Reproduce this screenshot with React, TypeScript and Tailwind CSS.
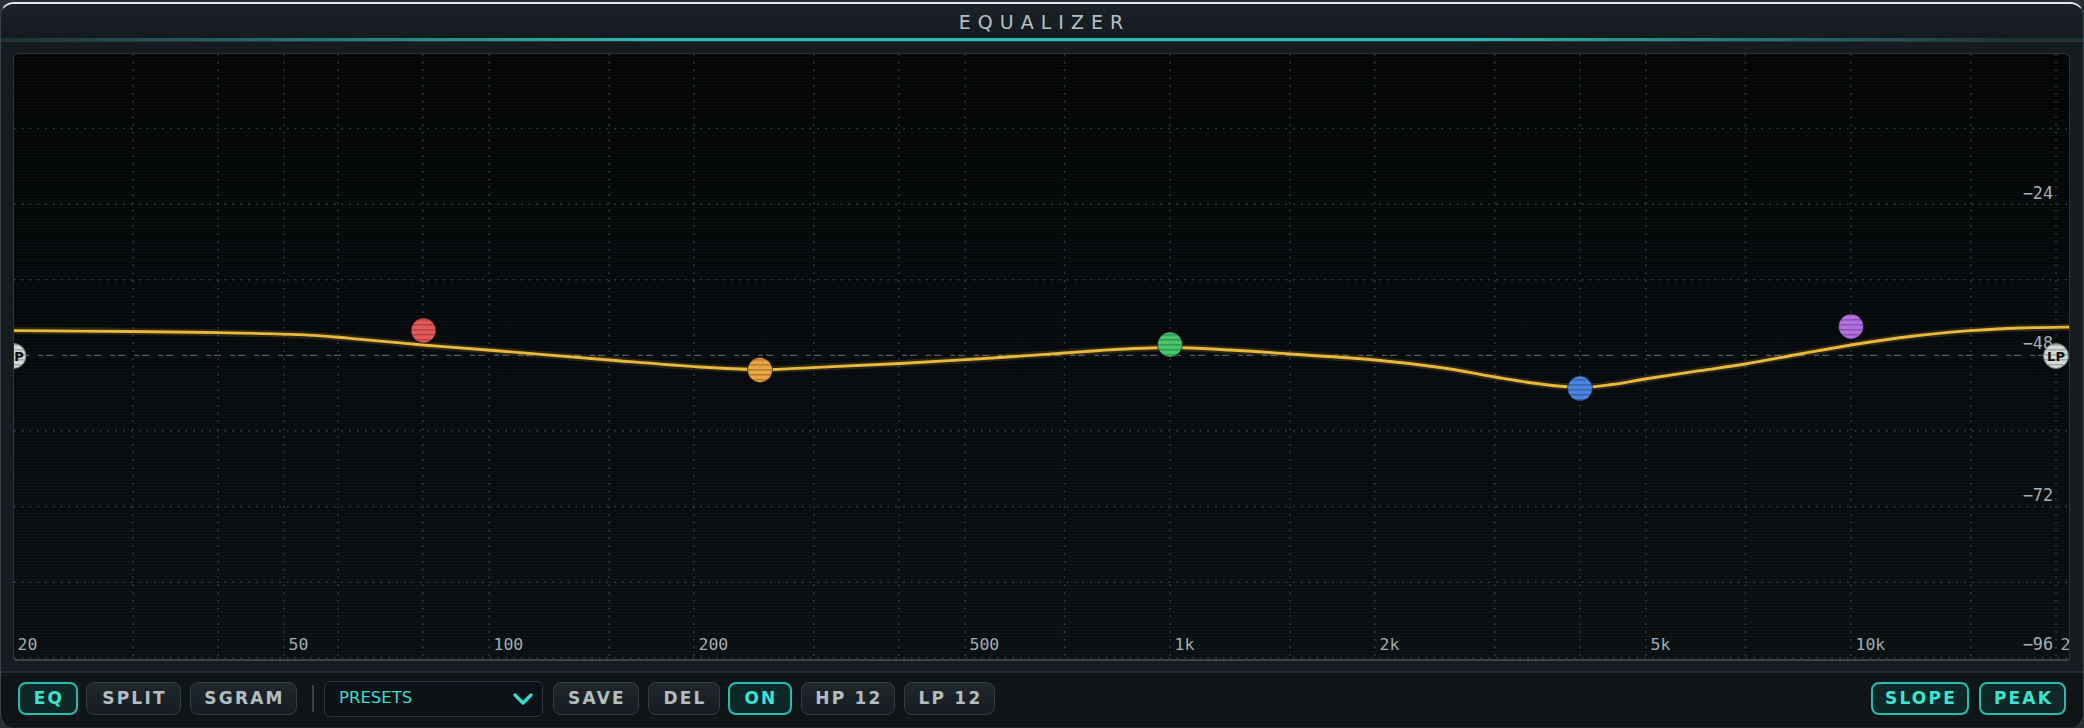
import React from 'react';

// graph inner box on the page starts at (14, 54); everything below is in inner coords
const OX = 14;
const OY = 54;
const W = 2055;
const H = 605;

const xOf = (f: number) => 681 * Math.log10(f / 20) + 13 - OX;
const yOf = (db: number) => 53 + (75.6 * -db) / 12 - OY;

const gridFreqs = [20, 30, 40, 50, 60, 80, 100, 150, 200, 300, 400, 500, 700, 1000, 1500, 2000, 3000, 4000, 5000, 7000, 10000, 15000, 20000];
const gridDbs = [0, -12, -24, -36, -60, -72, -84, -96];

const freqLabels = [
  { t: '20', f: 20 },
  { t: '50', f: 50 },
  { t: '100', f: 100 },
  { t: '200', f: 200 },
  { t: '500', f: 500 },
  { t: '1k', f: 1000 },
  { t: '2k', f: 2000 },
  { t: '5k', f: 5000 },
  { t: '10k', f: 10000 },
  { t: '20k', f: 20000 },
];

const dbLabels = [
  { t: '\u221224', y: 199 },
  { t: '\u221248', y: 349 },
  { t: '\u221272', y: 501 },
  { t: '\u221296', y: 650 },
];

// page coordinates of the response curve, read off the reference
const curvePts: [number, number][] = [
  [10, 330.6], [133, 331.5], [218, 332.7], [300, 334.7], [350, 338.3], [423, 345], [500, 351],
  [609, 360], [700, 367], [760, 369.5], [817, 367.3], [900, 363.5], [1000, 357.5], [1100, 350.5],
  [1170, 347.5], [1230, 350], [1290, 354], [1375, 360], [1440, 367.5], [1495, 377], [1540, 384],
  [1580, 387.3], [1612, 384.5], [1645, 379], [1700, 370.7], [1745, 364], [1800, 354], [1851, 345],
  [1910, 336.5], [1970, 330.7], [2020, 328], [2075, 327],
];

const nodes = [
  { x: 423.5, y: 330.5, fill: '#e35959' },
  { x: 760, y: 370, fill: '#e9a443' },
  { x: 1170, y: 344.5, fill: '#47c36a' },
  { x: 1580, y: 388.5, fill: '#4a82e0' },
  { x: 1851, y: 326.5, fill: '#b26fe0' },
];

function smoothPath(pts: [number, number][]) {
  const p = pts.map(([x, y]) => [x - OX, y - OY]);
  let d = `M${p[0][0]},${p[0][1]}`;
  for (let i = 0; i < p.length - 1; i++) {
    const p0 = p[i - 1] || p[i];
    const p1 = p[i];
    const p2 = p[i + 1];
    const p3 = p[i + 2] || p2;
    const c1x = p1[0] + (p2[0] - p0[0]) / 6;
    const c1y = p1[1] + (p2[1] - p0[1]) / 6;
    const c2x = p2[0] - (p3[0] - p1[0]) / 6;
    const c2y = p2[1] - (p3[1] - p1[1]) / 6;
    d += ` C${c1x},${c1y} ${c2x},${c2y} ${p2[0]},${p2[1]}`;
  }
  return d;
}

const Graph: React.FC = () => {
  const mid = yOf(-48);
  return (
    <div className="relative w-[2057px] h-[608px] rounded-t-[6px] rounded-b-[4px] border border-b-2 border-[#2a353a] border-b-[#3a4449] bg-gradient-to-b from-[#030506] via-[#070a0c] to-[#0a0f12] overflow-hidden">
      <svg width={W} height={H} className="absolute left-0 top-0">
        <defs>
          <pattern id="scan" width="4" height="3" patternUnits="userSpaceOnUse">
            <rect width="4" height="1" fill="#ffffff" opacity="0.018" />
          </pattern>
          <pattern id="stripes" width="6" height="5" patternUnits="userSpaceOnUse">
            <rect y="0" width="6" height="1.6" fill="#000000" opacity="0.22" />
          </pattern>
        </defs>
        <rect width={W} height={H} fill="url(#scan)" />

        {gridFreqs.map((f) => (
          <line key={f} x1={xOf(f)} x2={xOf(f)} y1={0} y2={H} stroke="#3a4449" strokeWidth="1.5" strokeDasharray="1.5 6.3" />
        ))}
        {gridDbs.map((db) => (
          <line key={db} x1={0} x2={W} y1={yOf(db)} y2={yOf(db)} stroke="#3a4449" strokeWidth="1.5" strokeDasharray="1.5 6.3" />
        ))}
        <line x1={0} x2={W} y1={mid} y2={mid} stroke="#4f595e" strokeWidth="1.2" strokeDasharray="5 3 7 9" />

        {freqLabels.map((l) => (
          <text key={l.t} x={xOf(l.f) + 4.5} y={650 - OY} fill="#a2acb1" fontSize="16.5" fontFamily="'DejaVu Sans Mono', monospace">
            {l.t}
          </text>
        ))}
        {dbLabels.map((l) => (
          <text key={l.t} x={2053 - OX} y={l.y - OY} textAnchor="end" fill="#a6b0b5" fontSize="16.8" fontFamily="'DejaVu Sans Mono', monospace">
            {l.t}
          </text>
        ))}

        <path d={smoothPath(curvePts)} fill="none" stroke="#e8b73a" strokeOpacity="0.16" strokeWidth="7" />
        <path d={smoothPath(curvePts)} fill="none" stroke="#e9b93d" strokeWidth="2.8" />

        {nodes.map((n) => (
          <g key={n.x}>
            <circle cx={n.x - OX} cy={n.y - OY} r="12.5" fill={n.fill} />
            <circle cx={n.x - OX} cy={n.y - OY} r="12.5" fill="url(#stripes)" stroke="#000000" strokeOpacity="0.45" strokeWidth="1.2" />
          </g>
        ))}

        {[
          { t: 'HP', x: 13.5 },
          { t: 'LP', x: 2056 },
        ].map((n) => (
          <g key={n.t}>
            <circle cx={n.x - OX} cy={356 - OY} r="12.5" fill="#d3d8d5" />
            <circle cx={n.x - OX} cy={356 - OY} r="12.5" fill="url(#stripes)" stroke="#6f777b" strokeWidth="1" />
            <text x={n.x - OX} y={356 - OY + 4.8} textAnchor="middle" fill="#0d0f10" fontSize="13" fontWeight="bold" fontFamily="'DejaVu Sans', sans-serif">
              {n.t}
            </text>
          </g>
        ))}
      </svg>
    </div>
  );
};

interface BtnProps {
  label: string;
  w: string;
  active?: boolean;
  className?: string;
}

const Btn: React.FC<BtnProps> = ({ label, w, active, className = '' }) => (
  <div
    className={`${w} ${className} h-[33px] flex items-center justify-center pl-[2px] rounded-[8px] text-[17px] font-bold tracking-[2.2px] ${
      active
        ? 'border-2 border-[#29bcae] bg-[#0d2826] text-[#3ae5d3]'
        : 'border border-[#323d43] bg-gradient-to-b from-[#20282d] to-[#161c20] text-[#b3bcc1]'
    }`}
  >
    {label}
  </div>
);

export default function App() {
  return (
    <div className="w-[2084px] h-[728px] bg-[#2a2f33] pt-[2px] font-['DejaVu_Sans',sans-serif]">
      <div className="h-[726px] flex flex-col rounded-[14px] overflow-hidden border-t-2 border-x border-b border-t-[#e2e8eb] border-x-[#3a454b] border-b-[#1d2428] bg-[#151b1f]">
        {/* title bar */}
        <div className="h-[34px] flex items-center justify-center pl-[5px] pt-[2px] bg-gradient-to-b from-[#1c2328] to-[#141a1e] text-[19px] tracking-[7px] text-[#b6c1c7]">
          EQUALIZER
        </div>
        <div className="h-[3px] bg-[linear-gradient(to_right,#1f3036_0%,#2abfb1_32%,#2abfb1_70%,#1f3036_97%)]" />
        <div className="h-px bg-[#2b373d]" />

        {/* graph */}
        <div className="pl-[12px] pt-[11px] pb-[10px]">
          <Graph />
        </div>
        <div className="h-[2px] bg-[#222b30]" />

        {/* toolbar */}
        <div className="flex-1 bg-[#0f1417]">
          <div className="h-[51px] flex items-center pl-[17px] pr-[17px]">
            <Btn label="EQ" w="w-[60px]" active />
            <Btn label="SPLIT" w="w-[95px]" className="ml-[8px]" />
            <Btn label="SGRAM" w="w-[107px]" className="ml-[9px]" />
            <div className="ml-[15px] w-[2px] h-[27px] bg-[#3a4349]" />
            <div className="ml-[10px] w-[219px] h-[36px] flex items-center justify-between pl-[14px] pr-[9px] rounded-[6px] border border-[#2c373d] bg-[#0b1114] text-[16.5px] text-[#35dfcd]">
              <span>PRESETS</span>
              <svg width="20" height="12" viewBox="0 0 20 12">
                <polyline points="2,2 10,10 18,2" fill="none" stroke="#35dfcd" strokeWidth="3.2" strokeLinecap="round" strokeLinejoin="round" />
              </svg>
            </div>
            <Btn label="SAVE" w="w-[86px]" className="ml-[10px]" />
            <Btn label="DEL" w="w-[72px]" className="ml-[9px]" />
            <Btn label="ON" w="w-[64px]" className="ml-[8px]" active />
            <Btn label="HP 12" w="w-[94px]" className="ml-[9px]" />
            <Btn label="LP 12" w="w-[91px]" className="ml-[9px]" />
            <div className="flex-1" />
            <Btn label="SLOPE" w="w-[98px]" active />
            <Btn label="PEAK" w="w-[87px]" className="ml-[10px]" active />
          </div>
        </div>
      </div>
    </div>
  );
}
